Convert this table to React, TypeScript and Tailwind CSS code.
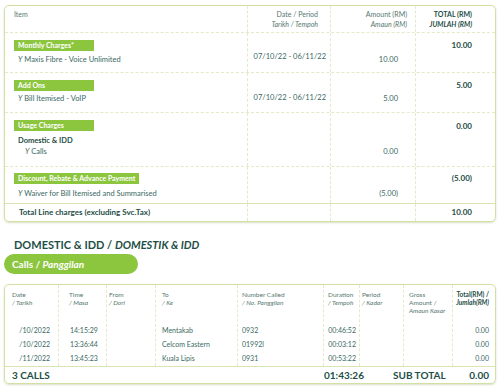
import type { ReactNode } from "react";

const line = "border-[#e3ebc6]";

function Label({ children }: { children: ReactNode }) {
  return (
    <div className="ml-[9px] flex h-[11px] w-fit min-w-[80px] items-center bg-[#8cc63f] px-[4px] text-[7px] font-bold leading-none text-white">
      {children}
    </div>
  );
}

function Row({
  h,
  item,
  date,
  amount,
  total,
  datePt,
  amountPt,
  totalPt,
  solid,
}: {
  h: string;
  item: ReactNode;
  date?: string;
  amount?: string;
  total?: string;
  datePt?: string;
  amountPt?: string;
  totalPt?: string;
  solid?: boolean;
}) {
  return (
    <div
      className={`grid grid-cols-[242px_83px_85px_1fr] border-t ${
        solid ? "border-solid border-[#d9e4b2]" : `border-dashed ${line}`
      } ${h}`}
    >
      <div>{item}</div>
      <div className={`border-l border-dashed ${line} pr-[4px] text-right text-[7.5px] leading-[10px] ${datePt}`}>
        {date}
      </div>
      <div className={`border-l border-dashed ${line} pr-[17px] text-right text-[7.5px] leading-[10px] ${amountPt}`}>
        {amount}
      </div>
      <div className={`border-l border-dashed ${line} pr-[23px] text-right text-[8px] font-bold leading-[10px] text-[#1e4d45] ${totalPt}`}>
        {total}
      </div>
    </div>
  );
}

type Col = {
  w: string;
  head: ReactNode;
  cells: ReactNode[];
};

const calls = [
  { d: "01/10/2022", t: "14:15:29", to: "Mentakab", no: "0932", dur: "00:46:52" },
  { d: "11/10/2022", t: "13:36:44", to: "Celcom Eastern", no: "01992l", dur: "00:03:12" },
  { d: "01/11/2022", t: "13:45:23", to: "Kuala Lipis", no: "0931", dur: "00:53:22" },
];

const hd = "text-[6.5px] leading-[8px] text-[#56786f]";
const it = "italic";

const cols: Col[] = [
  {
    w: "w-[53px]",
    head: (
      <div className={`pl-[7px] ${hd}`}>
        <div>Date</div>
        <div className={it}>/ Tarikh</div>
      </div>
    ),
    // day digits are cut off in the source document
    cells: calls.map((c) => (
      <div className="ml-[14px] mr-[8px] flex justify-end overflow-hidden whitespace-nowrap">
        <span className="shrink-0">{c.d}</span>
      </div>
    )),
  },
  {
    w: "w-[48px]",
    head: (
      <div className={`pl-[10px] ${hd}`}>
        <div>Time</div>
        <div className={it}>/ Masa</div>
      </div>
    ),
    cells: calls.map((c) => <div className="pl-[11px]">{c.t}</div>),
  },
  {
    w: "w-[49px]",
    head: (
      <div className={`pl-[2px] ${hd}`}>
        <div>From</div>
        <div className={it}>/ Dori</div>
      </div>
    ),
    cells: calls.map(() => <div />),
  },
  {
    w: "w-[82px]",
    head: (
      <div className={`pl-[6px] ${hd}`}>
        <div>To</div>
        <div className={it}>/ Ke</div>
      </div>
    ),
    cells: calls.map((c) => <div className="pl-[6px]">{c.to}</div>),
  },
  {
    w: "w-[86px]",
    head: (
      <div className={`pl-[4px] ${hd}`}>
        <div>Number Called</div>
        <div className={it}>/ No. Panggilan</div>
      </div>
    ),
    cells: calls.map((c) => <div className="pl-[4px]">{c.no}</div>),
  },
  {
    w: "w-[36px]",
    head: (
      <div className={`pl-[4px] whitespace-nowrap ${hd}`}>
        <div>Duration</div>
        <div className={it}>/ Tempoh</div>
      </div>
    ),
    cells: calls.map((c) => <div className="pr-[3px] text-right">{c.dur}</div>),
  },
  {
    w: "w-[44px]",
    head: (
      <div className={`pl-[2px] ${hd}`}>
        <div>Period</div>
        <div className={it}>/ Kadar</div>
      </div>
    ),
    cells: calls.map(() => <div />),
  },
  {
    w: "w-[49px]",
    head: (
      <div className={`pl-[5px] ${hd}`}>
        <div>Gross</div>
        <div>
          Amount <span className={it}>/</span>
        </div>
        <div className={it}>Amaun Kasar</div>
      </div>
    ),
    cells: calls.map(() => <div />),
  },
  {
    w: "flex-1",
    head: (
      <div className="pr-[6px] text-right text-[6.5px] font-bold leading-[8px] text-[#1e4d45]">
        <div>Total(RM) /</div>
        <div className={it}>Jumlah(RM)</div>
      </div>
    ),
    cells: calls.map(() => <div className="pr-[6px] text-right">0.00</div>),
  },
];

export default function App() {
  return (
    <div className="h-[387px] w-[500px] overflow-hidden bg-white font-['Lato','Liberation_Sans',sans-serif] text-[#3a695f]">
      {/* Line charges summary */}
      <div className="mx-[4px] mt-[5px] rounded-[5px] border border-[#d3e0a4] shadow-[0_1px_2px_rgba(130,150,70,0.3)]">
        <div className="grid h-[26px] grid-cols-[242px_83px_85px_1fr]">
          <div className="pl-[9px] pt-[3px] text-[7px] leading-[10px] text-[#56786f]">Item</div>
          <div className={`border-l border-dashed ${line} pr-[12px] pt-[3px] text-right text-[7px] leading-[10px] text-[#56786f]`}>
            <div>Date / Period</div>
            <div className="italic">Tarikh / Tempoh</div>
          </div>
          <div className={`border-l border-dashed ${line} pr-[8px] pt-[3px] text-right text-[7px] leading-[10px] text-[#56786f]`}>
            <div>Amount (RM)</div>
            <div className="italic">Amaun (RM)</div>
          </div>
          <div className={`border-l border-dashed ${line} pr-[23px] pt-[3px] text-right text-[7px] font-bold leading-[10px] text-[#1e4d45]`}>
            <div>TOTAL (RM)</div>
            <div className="italic">JUMLAH (RM)</div>
          </div>
        </div>

        <Row
          h="h-[40px]"
          item={
            <div className="pt-[7px]">
              <Label>Monthly Charges*</Label>
              <div className="mt-[4px] pl-[13px] text-[7.5px] leading-[10px]">
                <span className="italic">Y</span> Maxis Fibre - Voice Unlimited
              </div>
            </div>
          }
          date="07/10/22 - 06/11/22"
          datePt="pt-[19px]"
          amount="10.00"
          amountPt="pt-[22px]"
          total="10.00"
          totalPt="pt-[7px]"
        />
        <Row
          h="h-[40px]"
          item={
            <div className="pt-[7px]">
              <Label>Add Ons</Label>
              <div className="mt-[3px] pl-[13px] text-[7.5px] leading-[10px]">
                <span className="italic">Y</span> Bill Itemised - VoIP
              </div>
            </div>
          }
          date="07/10/22 - 06/11/22"
          datePt="pt-[20px]"
          amount="5.00"
          amountPt="pt-[21px]"
          total="5.00"
          totalPt="pt-[7px]"
        />
        <Row
          h="h-[54px]"
          item={
            <div className="pt-[7px]">
              <Label>Usage Charges</Label>
              <div className="mt-[5px] pl-[13px] text-[7.5px] font-bold leading-[10px] text-[#1e4d45]">
                Domestic &amp; IDD
              </div>
              <div className="mt-[1px] pl-[20px] text-[7.5px] leading-[10px]">
                <span className="italic">Y</span> Calls
              </div>
            </div>
          }
          amount="0.00"
          amountPt="pt-[34px]"
          total="0.00"
          totalPt="pt-[8px]"
        />
        <Row
          h="h-[37px]"
          item={
            <div className="pt-[6px]">
              <Label>Discount, Rebate &amp; Advance Payment</Label>
              <div className="mt-[5px] pl-[13px] text-[7.5px] leading-[10px]">
                <span className="italic">Y</span> Waiver for Bill Itemised and Summarised
              </div>
            </div>
          }
          amount="(5.00)"
          amountPt="pt-[22px]"
          total="(5.00)"
          totalPt="pt-[6px]"
        />
        <Row
          h="h-[18px]"
          solid
          item={
            <div className="pl-[14px] pt-[3px] text-[8px] font-bold leading-[10px] text-[#1e4d45]">
              Total Line charges (excluding Svc.Tax)
            </div>
          }
          total="10.00"
          totalPt="pt-[3px]"
        />
      </div>

      {/* Domestic & IDD */}
      <div className="ml-[14px] mt-[16px] text-[11px] font-bold leading-[14px] text-[#1e4f47]">
        DOMESTIC &amp; IDD / <span className="italic">DOMESTIK &amp; IDD</span>
      </div>
      <div className="ml-[4px] mt-[2px] flex h-[20px] w-[134px] items-center rounded-full bg-[#8cc63f] pl-[8px] text-[10px] font-bold text-white">
        Calls /&nbsp;<span className="italic">Panggilan</span>
      </div>

      <div className="mx-[4px] mt-[10px] rounded-[5px] border border-[#d3e0a4] shadow-[0_1px_2px_rgba(130,150,70,0.3)]">
        <div className="flex">
          {cols.map((c, i) => (
            <div
              key={i}
              className={`${c.w} ${i > 0 ? `border-l border-dashed ${line}` : ""}`}
            >
              <div className="h-[32px] pt-[6px]">{c.head}</div>
              <div className="pb-[1px] pt-[6px] text-[7px] leading-[14px]">
                {c.cells.map((cell, j) => (
                  <div key={j} className="h-[14px]">
                    {cell}
                  </div>
                ))}
              </div>
            </div>
          ))}
        </div>
        <div className="flex h-[17px] items-center border-t border-[#d9e4b2] text-[10px] font-bold text-[#1e4f47]">
          <div className="w-[319px] pl-[7px]">3 CALLS</div>
          <div className="w-[69px]">01:43:26</div>
          <div className="flex-1">SUB TOTAL</div>
          <div className="pr-[6px]">0.00</div>
        </div>
      </div>
    </div>
  );
}
